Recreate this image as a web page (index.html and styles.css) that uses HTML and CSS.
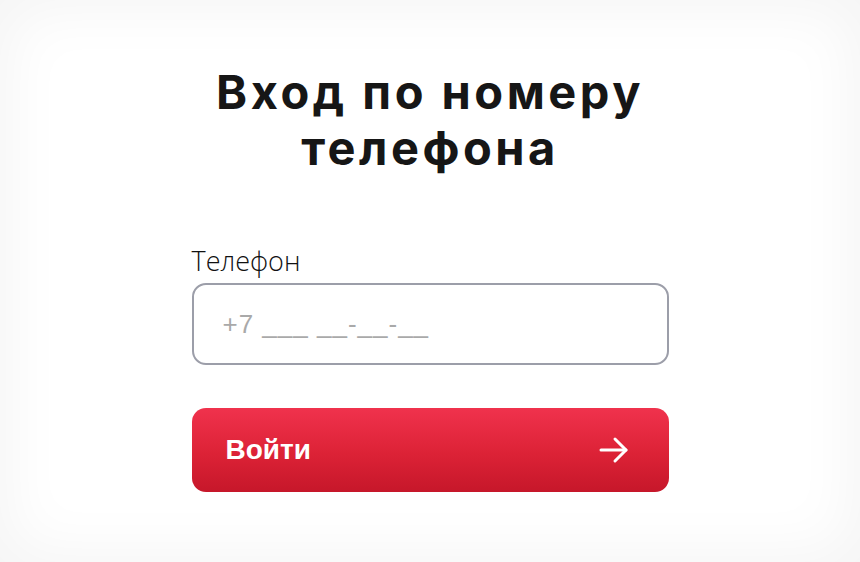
FILE: index.html
```html
<!DOCTYPE html>
<html lang="ru">
<head>
<meta charset="utf-8">
<title>Вход по номеру телефона</title>
<link rel="stylesheet" href="styles.css">
</head>
<body>
<main class="page">
  <section class="login">
    <h1 class="login__title">Вход по номеру<br>телефона</h1>
    <form class="login__form">
      <label class="field">
        <span class="field__label">Телефон</span>
        <input class="field__input" type="tel" placeholder="+7 ___ __-__-__">
      </label>
      <button class="btn" type="button">
        <span class="btn__text">Войти</span>
        <svg class="btn__icon" width="30" height="28" viewBox="0 0 30 28" fill="none" stroke="#fff" stroke-width="3" stroke-linecap="round" stroke-linejoin="round">
          <path d="M2 14H27"/>
          <path d="M16 3L27 14L16 25"/>
        </svg>
      </button>
    </form>
  </section>
</main>
</body>
</html>
```

FILE: styles.css
```css
* { box-sizing: border-box; }
html, body { margin: 0; padding: 0; height: 100%; }
body {
  background: #ffffff;
  font-family: "Liberation Sans", Arial, sans-serif;
}
.page {
  height: 562px;
  box-shadow: inset 0 0 60px 10px rgba(0, 0, 0, 0.045);
  display: flex;
  justify-content: center;
}
.login {
  width: 477px;
  padding-top: 64px;
}
.login__title {
  margin: 0;
  text-align: center;
  font-family: Inter, "Open Sans", sans-serif;
  font-weight: 700;
  font-size: 47px;
  line-height: 56px;
  letter-spacing: 3.5px;
  color: #161616;
}
.login__form {
  margin-top: 70px;
  display: flex;
  flex-direction: column;
}
.field {
  display: flex;
  flex-direction: column;
}
.field__label {
  font-family: "Open Sans", sans-serif;
  font-weight: 300;
  font-size: 27px;
  line-height: 30px;
  color: #111;
  margin-bottom: 7px;
}
.field__input {
  height: 82px;
  border: 2px solid #9c9ea9;
  border-radius: 14px;
  padding: 0 29px;
  font-family: "Liberation Sans", Arial, sans-serif;
  font-size: 26px;
  letter-spacing: 1px;
  color: #333;
  outline: none;
  background: #fff;
}
.field__input::placeholder { color: #a9a9a9; }
.btn {
  margin-top: 43px;
  height: 84px;
  border: 0;
  border-radius: 14px;
  background: linear-gradient(180deg, #f0324d 0%, #dc2236 55%, #c6172a 100%);
  display: flex;
  align-items: center;
  justify-content: space-between;
  padding: 0 40px 0 34px;
  cursor: pointer;
}
.btn__text {
  font-family: "Liberation Sans", Arial, sans-serif;
  font-weight: 700;
  font-size: 28px;
  color: #fff;
}
.btn__icon { display: block; }
```
